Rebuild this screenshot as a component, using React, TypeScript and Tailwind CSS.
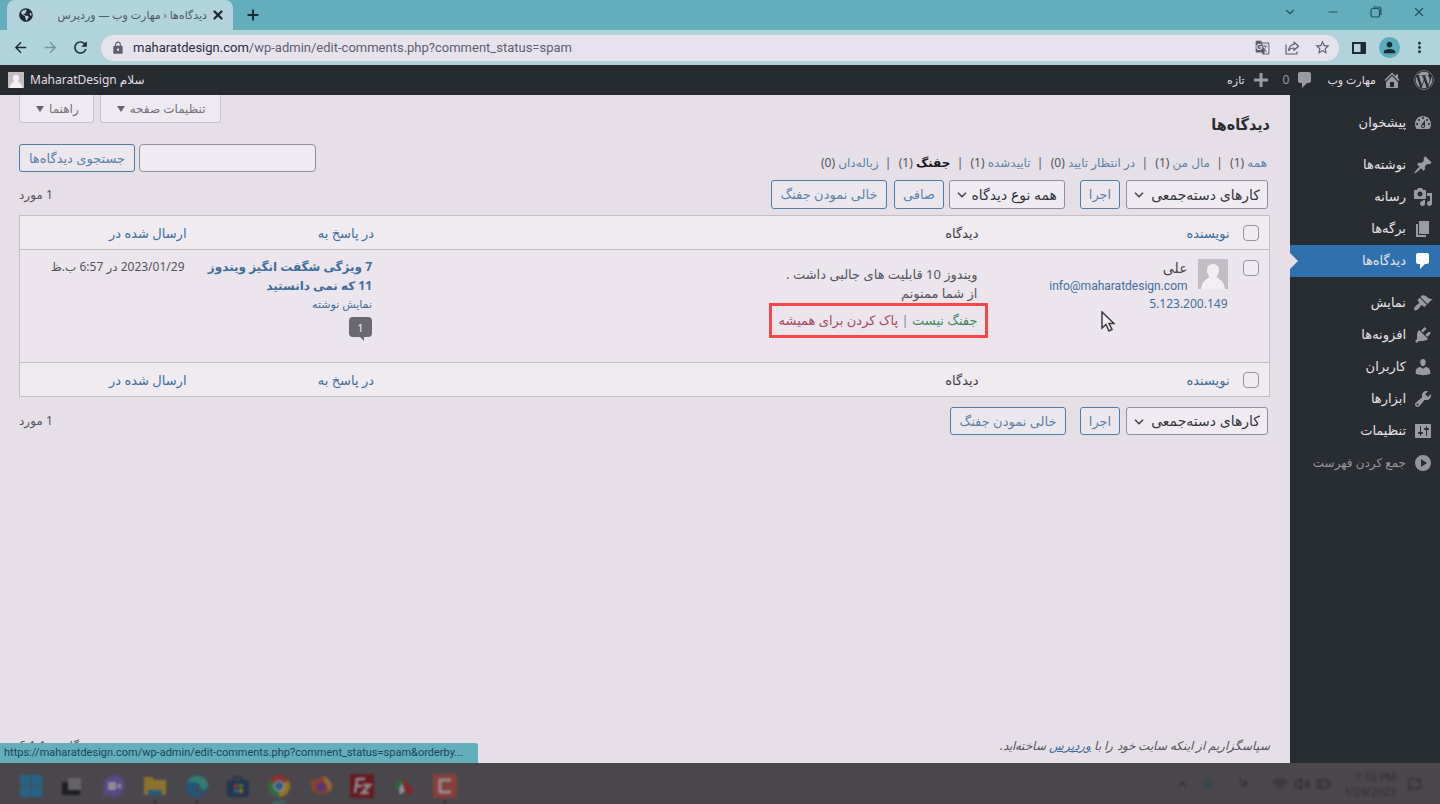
import type { ReactNode } from "react";
import { FaGlobeAmericas, FaWordpress } from "react-icons/fa";
import {
    MdArrowBack,
    MdArrowForward,
    MdGTranslate,
    MdLock,
    MdMoreVert,
    MdPerson,
    MdRefresh,
    MdStarBorder,
} from "react-icons/md";
import { BatteryMedium, ChevronDown, ChevronUp, MessageSquareDot, Mic, Minus, Plus, Volume2, Wifi, X } from "lucide-react";

const icons = {
    dashboard:
        "M3.76 16h12.48c1.1-1.37 1.76-3.11 1.76-5 0-4.42-3.58-8-8-8s-8 3.58-8 8c0 1.89.66 3.63 1.76 5zM10 4c.55 0 1 .45 1 1s-.45 1-1 1-1-.45-1-1 .45-1 1-1zM6 6c.55 0 1 .45 1 1s-.45 1-1 1-1-.45-1-1 .45-1 1-1zm8 0c.55 0 1 .45 1 1s-.45 1-1 1-1-.45-1-1 .45-1 1-1zm-5.37 5.55L12 7v6c0 1.1-.9 2-2 2s-2-.9-2-2c0-.57.24-1.08.63-1.45zM4 10c.55 0 1 .45 1 1s-.45 1-1 1-1-.45-1-1 .45-1 1-1zm12 0c.55 0 1 .45 1 1s-.45 1-1 1-1-.45-1-1 .45-1 1-1zm-5 3c0-.55-.45-1-1-1s-1 .45-1 1 .45 1 1 1 1-.45 1-1z",
    post: "M10.44 3.02l1.82-1.82 6.36 6.35-1.83 1.82c-1.05-.68-2.48-.57-3.41.36l-.75.75c-.92.93-1.04 2.35-.35 3.41l-1.83 1.82-2.41-2.41-2.8 2.79c-.42.42-3.38 2.71-3.8 2.29s1.86-3.39 2.28-3.81l2.79-2.79L4.1 9.36l1.83-1.82c1.05.69 2.48.57 3.4-.36l.75-.75c.93-.92 1.05-2.35.36-3.41z",
    media: "M13 11V4c0-.55-.45-1-1-1h-1.67L9 1H5L3.67 3H2c-.55 0-1 .45-1 1v7c0 .55.45 1 1 1h10c.55 0 1-.45 1-1zM7 4.5c1.38 0 2.5 1.12 2.5 2.5S8.38 9.5 7 9.5 4.5 8.38 4.5 7 5.62 4.5 7 4.5zM14 6h5v10.5c0 1.38-1.12 2.5-2.5 2.5S14 17.88 14 16.5s1.12-2.5 2.5-2.5c.17 0 .34.02.5.05V9h-3V6zm-4 8.05V13h2v3.5c0 1.38-1.12 2.5-2.5 2.5S7 17.88 7 16.5 8.12 14 9.5 14c.17 0 .34.02.5.05z",
    page: "M6 15V2h10v13H6zm-1 1h8v2H3V5h2v11z",
    comment: "M5 2h9c1.1 0 2 .9 2 2v7c0 1.1-.9 2-2 2h-2l-5 5v-5H5c-1.1 0-2-.9-2-2V4c0-1.1.9-2 2-2z",
    appearance:
        "M14.48 11.06L7.41 3.99l1.5-1.5c.5-.56 2.3-.47 3.51.32 1.21.8 1.43 1.28 2.91 2.1 1.18.64 2.45 1.26 4.45.85zm-.71.71L6.7 4.7 4.93 6.47c-.39.39-.39 1.02 0 1.41l1.06 1.06c.39.39.39 1.03 0 1.42-.6.6-1.43 1.11-2.21 1.69-.35.26-.7.53-1.01.84C1.43 14.23.4 16.08 1.4 17.07c.99 1 2.84-.03 4.18-1.36.31-.31.58-.66.85-1.02.57-.78 1.08-1.61 1.69-2.21.39-.39 1.02-.39 1.41 0l1.06 1.06c.39.39 1.02.39 1.41 0z",
    plugins:
        "M13.11 4.36L9.87 7.6 8 5.73l3.24-3.24c.35-.34 1.05-.2 1.56.32.52.51.66 1.21.31 1.55zm-8 1.77l.91-1.12 9.01 9.01-1.19.84c-.71.71-2.63 1.16-3.82 1.16H6.14L4.9 17.26c-.59.59-1.54.59-2.12 0-.59-.58-.59-1.53 0-2.12l1.24-1.24v-3.88c0-1.13.4-3.19 1.09-3.89zm7.26 3.97l3.24-3.24c.34-.35 1.04-.21 1.55.31.52.51.66 1.21.31 1.55l-3.24 3.25z",
    users: "M10 9.25c-2.27 0-2.73-3.44-2.73-3.44C7 4.02 7.82 2 9.97 2c2.16 0 2.98 2.02 2.71 3.81 0 0-.41 3.44-2.68 3.44zm0 2.57L12.72 10c2.39 0 4.52 2.33 4.52 4.53v2.49s-3.65 1.13-7.24 1.13c-3.65 0-7.24-1.13-7.24-1.13v-2.49c0-2.25 1.94-4.48 4.47-4.48z",
    tools: "M16.68 9.77c-1.34 1.34-3.3 1.67-4.95.99l-5.41 6.52c-.99.99-2.59.99-3.58 0s-.99-2.59 0-3.57l6.52-5.42c-.68-1.65-.35-3.61.99-4.95 1.28-1.28 3.12-1.62 4.72-1.06l-2.89 2.89 2.82 2.82 2.86-2.87c.53 1.58.18 3.39-1.08 4.65zM3.81 16.21c.4.39 1.04.39 1.43 0 .4-.4.4-1.04 0-1.43-.39-.4-1.03-.4-1.43 0-.39.39-.39 1.03 0 1.43z",
    settings:
        "M18 16V4c0-.55-.45-1-1-1H3c-.55 0-1 .45-1 1v12c0 .55.45 1 1 1h14c.55 0 1-.45 1-1zM8 11h1c.55 0 1 .45 1 1s-.45 1-1 1H8v1.5c0 .28-.22.5-.5.5s-.5-.22-.5-.5V13H6c-.55 0-1-.45-1-1s.45-1 1-1h1V5.5c0-.28.22-.5.5-.5s.5.22.5.5V11zm5-2h-1c-.55 0-1-.45-1-1s.45-1 1-1h1V5.5c0-.28.22-.5.5-.5s.5.22.5.5V7h1c.55 0 1 .45 1 1s-.45 1-1 1h-1v5.5c0 .28-.22.5-.5.5s-.5-.22-.5-.5V9z",
    home: "M16 8.5l1.53 1.53-1.06 1.06L10 4.6l-6.47 6.49-1.06-1.06L10 2.5l4 4v-2h2v4zm-6-2.46l6 5.99V18H4v-5.97zM12 17v-5H8v5h4z",
    plus: "M17 8.5v3h-5.5V17h-3v-5.5H3v-3h5.5V3h3v5.5H17z",
    collapse: "M10 2a8 8 0 1 0 0 16 8 8 0 0 0 0-16zM8 6l6 4-6 4V6z",
};

type IconName = keyof typeof icons;

const Dashicon = ({ name, className = "" }: { name: IconName; className?: string }) => (
    <svg viewBox="0 0 20 20" className={`size-5 shrink-0 ${className}`} fill="currentColor" fillRule="evenodd">
        <path d={icons[name]} />
    </svg>
);

const menuGroups: { label: string; icon: IconName }[][] = [
    [{ label: "پیشخوان", icon: "dashboard" }],
    [
        { label: "نوشته‌ها", icon: "post" },
        { label: "رسانه", icon: "media" },
        { label: "برگه‌ها", icon: "page" },
        { label: "دیدگاه‌ها", icon: "comment" },
    ],
    [
        { label: "نمایش", icon: "appearance" },
        { label: "افزونه‌ها", icon: "plugins" },
        { label: "کاربران", icon: "users" },
        { label: "ابزارها", icon: "tools" },
        { label: "تنظیمات", icon: "settings" },
    ],
];

const filters = [
    { label: "همه", count: 1 },
    { label: "مال من", count: 1 },
    { label: "در انتظار تایید", count: 0 },
    { label: "تاییدشده", count: 1 },
    { label: "جفنگ", count: 1, current: true },
    { label: "زباله‌دان", count: 0 },
];

const Avatar = ({ className }: { className: string }) => (
    <svg viewBox="0 0 30 30" className={`shrink-0 ${className}`}>
        <rect width="30" height="30" fill="#c2bcc4" />
        <path d="M15 5c4 0 6 3 6 6 0 3-1 5-2.5 6.5C19 20 26 20 27 30H3c1-10 8-10 8.5-12.5C10 16 9 14 9 11c0-3 2-6 6-6z" fill="#f3eef4" />
    </svg>
);

const Button = ({ children, className = "" }: { children: ReactNode; className?: string }) => (
    <button
        type="button"
        className={`whitespace-nowrap rounded-[3px] border border-[#4f7fa8] bg-[#ece7ef] pt-px text-[13px] text-[#5a83aa] ${className}`}
    >
        {children}
    </button>
);

const Select = ({ label, className }: { label: string; className: string }) => (
    <div className="relative">
        <select
            aria-label={label}
            className={`block appearance-none rounded-[3px] border border-[#928d96] bg-[#f0ebf2] pr-[7px] pl-5 text-sm text-[#33343a] ${className}`}
        >
            <option>{label}</option>
        </select>
        <ChevronDown className="pointer-events-none absolute top-2 left-[6px] size-[14px] text-[#4b4b52]" strokeWidth={3} />
    </div>
);

const Checkbox = ({ label }: { label: string }) => (
    <input
        type="checkbox"
        aria-label={label}
        className="block size-4 appearance-none rounded-[4px] border border-[#96919a] bg-[#f0ebf2]"
    />
);

const HeadingRow = () => (
    <tr className="h-[34px] text-[13px] text-[#3c3d43]">
        <th className="pr-[10px]">
            <Checkbox label="انتخاب همه" />
        </th>
        <th className="px-2 pt-[2px] font-normal">
            <a href="#author" className="text-[#3a6fa0]">نویسنده</a>
        </th>
        <th className="px-[9px] pt-[2px] font-normal">دیدگاه</th>
        <th className="px-2 pt-[2px] font-normal">
            <a href="#response" className="text-[#3a6fa0]">در پاسخ به</a>
        </th>
        <th className="px-2 pt-[2px] font-normal">
            <a href="#date" className="text-[#3a6fa0]">ارسال شده در</a>
        </th>
    </tr>
);

const BrowserChrome = () => (
    <header dir="ltr" className="font-['Roboto','DejaVu_Sans',sans-serif] text-[#1d2a36]">
        <div className="flex h-[30px] items-stretch bg-[#62aebb] pl-[7px]">
            <div className="flex w-[226px] items-center rounded-t-lg bg-[#b3d3dc] px-3">
                <FaGlobeAmericas className="size-[14px]" />
                <span dir="rtl" className="ml-auto font-['Open_Sans','DejaVu_Sans',sans-serif] text-[11px] text-[#4a5b66]">
                    دیدگاه‌ها ‹ مهارت وب — وردپرس
                </span>
                <button type="button" aria-label="Close tab" className="-mr-1 ml-1">
                    <X className="size-[14px]" strokeWidth={4} />
                </button>
            </div>
            <button type="button" aria-label="New tab" className="ml-3">
                <Plus className="size-4" strokeWidth={3} />
            </button>
            <div className="ml-auto flex items-center gap-[29px] pr-[14px] pb-[6px] text-[#23525f]">
                <ChevronDown className="size-[14px]" strokeWidth={2} />
                <Minus className="size-[14px]" strokeWidth={2} />
                <svg viewBox="0 0 14 14" className="size-[14px]" fill="none" stroke="currentColor" strokeWidth="1.2">
                    <rect x="2" y="3.5" width="8.5" height="8.5" rx="2" />
                    <path d="M4 2h6a2 2 0 0 1 2 2v6" />
                </svg>
                <X className="size-[14px]" strokeWidth={2} />
            </div>
        </div>
        <div className="flex h-[35px] items-center bg-[#b3d3dc] px-3">
            <button type="button" aria-label="Back">
                <MdArrowBack className="size-[17px]" />
            </button>
            <button type="button" aria-label="Forward" className="ml-[13px] text-[#7493a0]">
                <MdArrowForward className="size-[17px]" />
            </button>
            <button type="button" aria-label="Reload" className="ml-3">
                <MdRefresh className="size-[19px]" />
            </button>
            <div className="ml-[11px] flex h-[26px] flex-1 items-center rounded-full bg-[#e6e3ee] pr-2 pl-[10px] text-[#5f5e6b]">
                <MdLock className="size-[14px]" />
                <div className="ml-2 flex-1 text-[13px]">
                    <span className="text-[#2b2c38]">maharatdesign.com</span>/wp-admin/edit-comments.php?comment_status=spam
                </div>
                <div className="flex items-center gap-[14px]">
                    <MdGTranslate className="size-[15px]" />
                    <svg viewBox="0 0 16 16" className="size-4" fill="none" stroke="currentColor" strokeWidth="1.2" strokeLinejoin="round">
                        <path d="M2 4.5V14h11v-2.5" />
                        <path d="M10 2l4.5 4.2L10 10.3V8c-2.7 0-4.2.8-5.3 2.6C5 7 6.8 4.8 10 4.4z" />
                    </svg>
                    <MdStarBorder className="size-[17px]" />
                </div>
            </div>
            <svg viewBox="0 0 14 12" className="ml-[13px] h-3 w-[14px]">
                <rect x="1" y="1" width="12" height="10" fill="none" stroke="currentColor" strokeWidth="2" />
                <path d="M8.5 0H14v12H8.5z" fill="currentColor" />
            </svg>
            <div className="ml-[13px] flex size-[21px] items-center justify-center rounded-full bg-[#5cabb8]">
                <MdPerson className="size-[17px]" />
            </div>
            <button type="button" aria-label="Menu" className="ml-[11px]">
                <MdMoreVert className="size-[17px]" />
            </button>
        </div>
    </header>
);

const AdminBar = () => (
    <div className="flex h-[30px] items-center bg-[#262b30] pr-[6px] pl-2 text-[11px] text-[#e3dee6]">
        <FaWordpress className="size-5 text-[#9b9ba3]" />
        <a href="#site" className="mr-3 flex items-center gap-[6px]">
            <Dashicon name="home" className="text-[#9b9ba3]" />
            مهارت وب
        </a>
        <a href="#comments" className="mr-3 flex items-center gap-[6px] text-xs text-[#9b9ba3]">
            <Dashicon name="comment" />0
        </a>
        <a href="#new" className="mr-3 flex items-center gap-[6px]">
            <Dashicon name="plus" className="text-[#9b9ba3]" />
            تازه
        </a>
        <a href="#profile" className="mr-auto flex items-center gap-[6px] text-xs">
            <span>سلام MaharatDesign</span>
            <Avatar className="size-4" />
        </a>
    </div>
);

const Sidebar = () => (
    <nav className="w-[150px] shrink-0 bg-[#282d32] pt-3 text-[13px] text-[#e6e1e9]">
        {menuGroups.map((group, i) => (
            <ul key={i} className="mb-[10px]">
                {group.map(({ label, icon }) => {
                    const active = icon === "comment";
                    return (
                        <li key={icon} className={active ? "relative bg-[#2e71ae]" : ""}>
                            <a href={`#${icon}`} className="flex h-8 items-center gap-[7px] pr-[7px]">
                                <Dashicon name={icon} className={active ? "text-white" : "text-[#9b9ba3]"} />
                                {label}
                            </a>
                            {active && (
                                <span className="absolute top-2 left-0 border-y-8 border-l-8 border-y-transparent border-l-[#e6dfe7]" />
                            )}
                        </li>
                    );
                })}
            </ul>
        ))}
        <button type="button" className="-mt-[10px] flex h-8 items-center gap-[7px] pr-[7px] text-xs text-[#95959d]">
            <Dashicon name="collapse" />
            جمع کردن فهرست
        </button>
    </nav>
);

const CommentsTable = () => (
    <table className="w-full table-fixed border border-[#c3bdc6] bg-[#ece5ed] text-right">
        <colgroup>
            <col className="w-8" />
            <col className="w-[20%]" />
            <col />
            <col className="w-[15%]" />
            <col className="w-[14%]" />
        </colgroup>
        <thead className="border-b border-[#c3bdc6] bg-[#f0ebf1]">
            <HeadingRow />
        </thead>
        <tbody>
            <tr className="h-[113px] align-top text-xs text-[#55555c]">
                <td className="pt-[10px] pr-[10px]">
                    <Checkbox label="انتخاب دیدگاه" />
                </td>
                <td className="px-[10px] pt-[9px] leading-[18px]">
                    <div className="flex gap-[10px]">
                        <Avatar className="size-[30px]" />
                        <div>
                            <strong className="block text-sm leading-[18px] font-medium text-[#45464c]">علی</strong>
                            <a href="mailto:info@maharatdesign.com" className="block font-['Roboto',sans-serif] text-[#3d6f9d]">info@maharatdesign.com</a>
                        </div>
                    </div>
                    <a href="#ip" className="block text-[#3d6f9d]">5.123.200.149</a>
                </td>
                <td className="px-[10px] pt-[15px] text-[13px] leading-[19px]">
                    <p>ویندوز 10 قابلیت های جالبی داشت .</p>
                    <p>از شما ممنونم</p>
                    <div className="relative mt-2 w-fit text-[#8b8791]">
                        <a href="#unspam" className="text-[#3f8a60]">جفنگ نیست</a> |{" "}
                        <a href="#delete" className="text-[#a8485f]">پاک کردن برای همیشه</a>
                        <span className="absolute -inset-x-[10px] -inset-y-2 border-3 border-[#fb4444]" />
                    </div>
                </td>
                <td className="px-[10px] pt-[7px] leading-[19px] text-[#3d6f9d]">
                    <a href="#post" className="block font-bold whitespace-nowrap">
                        7 ویژگی شگفت انگیز ویندوز
                        <br />
                        11 که نمی دانستید
                    </a>
                    <a href="#view" className="block text-[11px] leading-[18px]">نمایش نوشته</a>
                    <a href="#count" className="relative mt-1 flex h-5 w-[23px] items-center justify-center rounded-[4px] bg-[#6a6870] text-[11px] text-[#f3eef4]">
                        1
                        <span className="absolute top-full left-[11px] border-t-4 border-l-4 border-t-[#6a6870] border-l-transparent" />
                    </a>
                </td>
                <td className="px-[10px] pt-[7px] leading-[19px]">2023/01/29 در 6:57 ب.ظ</td>
            </tr>
        </tbody>
        <tfoot className="border-t border-[#c3bdc6] bg-[#f0ebf1]">
            <HeadingRow />
        </tfoot>
    </table>
);

const MetaTab = ({ label }: { label: string }) => (
    <button
        type="button"
        className="flex h-7 items-center gap-[5px] rounded-b-[3px] border border-t-0 border-[#c9c3cc] bg-[#efeaf1] pr-[14px] pl-4 text-xs text-[#74727a]"
    >
        {label}
        <span className="border-x-4 border-t-[6px] border-x-transparent border-t-[#66646c]" />
    </button>
);

const CommentsPage = () => (
    <main className="relative flex min-w-0 flex-1 flex-col bg-[#e6dfe7] pr-5 pl-[19px] text-[#55555c]">
        <div className="flex justify-between">
            <h1 className="pt-[18px] font-['DejaVu_Sans_Condensed','DejaVu_Sans',sans-serif] text-base leading-6 font-bold text-[#2b2c31]">
                دیدگاه‌ها
            </h1>
            <div className="flex items-start gap-[6px]">
                <MetaTab label="تنظیمات صفحه" />
                <MetaTab label="راهنما" />
            </div>
        </div>

        <div className="mt-[7px] flex justify-between">
            <ul className="flex gap-px pt-[10px] pr-[3px] text-xs leading-[18px]">
                {filters.map(({ label, count, current }, i) => (
                    <li key={label} className="whitespace-pre">
                        {i > 0 && "  |  "}
                        <a href="#filter" className={current ? "font-bold text-[#17181c]" : "text-[#5a83aa]"}>
                            {label}
                        </a>{" "}
                        ({count})
                    </li>
                ))}
            </ul>
            <form className="flex items-center gap-1" onSubmit={(e) => e.preventDefault()}>
                <input
                    type="search"
                    aria-label="جستجوی دیدگاه‌ها"
                    className="h-7 w-[177px] rounded-[4px] border border-[#928d96] bg-[#f0ebf2] px-2 text-xs"
                />
                <Button className="h-7 w-[116px]">جستجوی دیدگاه‌ها</Button>
            </form>
        </div>

        <div className="mt-2 flex items-center pr-[2px]">
            <Select label="کارهای دسته‌جمعی" className="h-[29px] w-[142px]" />
            <Button className="mr-[6px] h-[29px] w-10">اجرا</Button>
            <div className="mr-[15px]">
                <Select label="همه نوع دیدگاه" className="h-[29px] w-[116px]" />
            </div>
            <Button className="mr-[5px] h-[29px] w-[50px]">صافی</Button>
            <Button className="mr-[7px] h-[29px] w-[116px]">خالی نمودن جفنگ</Button>
            <span className="mr-auto text-xs">1 مورد</span>
        </div>

        <div className="mt-[6px] mb-[10px]">
            <CommentsTable />
        </div>

        <div className="flex items-center pr-[2px]">
            <Select label="کارهای دسته‌جمعی" className="h-7 w-[142px]" />
            <Button className="mr-[6px] h-7 w-10">اجرا</Button>
            <Button className="mr-[14px] h-7 w-[116px]">خالی نمودن جفنگ</Button>
            <span className="mr-auto text-xs">1 مورد</span>
        </div>

        <footer className="mt-auto flex justify-between pb-2 text-xs leading-[18px]">
            <p className="italic">
                سپاسگزاریم از اینکه سایت خود را با{" "}
                <a href="#wordpress" className="text-[#3d6f9d] underline">وردپرس</a> ساخته‌اید.
            </p>
            <p>نگارش 6.1.1</p>
        </footer>

        {/* link preview of the browser */}
        <div
            dir="ltr"
            className="absolute bottom-0 left-0 h-5 min-w-[478px] whitespace-nowrap rounded-tr-[3px] bg-[#62aebb] px-1 font-['Roboto',sans-serif] text-[11px] leading-5 text-[#1d4653]"
        >
            https://maharatdesign.com/wp-admin/edit-comments.php?comment_status=spam&orderby...
        </div>

        {/* mouse pointer */}
        <svg viewBox="0 0 14 21" className="absolute top-[216px] right-[175px] h-[21px] w-[14px]">
            <path d="M1 1v16l4-3.5 3 6.5 3-1.5-3-6h5z" fill="#f3eef4" stroke="#3a3a42" strokeWidth="1.5" />
        </svg>
    </main>
);

const taskbarApps: { name: string; running?: boolean; art: ReactNode }[] = [
    { name: "Start", art: <path d="M1 1h10.5v10.5H1zM12.5 1H23v10.5H12.5zM1 12.5h10.5V23H1zM12.5 12.5H23V23H12.5z" fill="#1f6a96" /> },
    {
        name: "Task view",
        art: (
            <>
                <path d="M8 4h13v12H8z" fill="#6d6a70" />
                <path d="M2 8h6v8h12v5H2z" fill="#161519" />
            </>
        ),
    },
    {
        name: "Chat",
        art: (
            <>
                <path d="M12 1a11 11 0 1 1-5 20.7L1 23l1-6A11 11 0 0 1 12 1z" fill="#5a4c8c" />
                <path d="M6 8h8v8H6zM15 11l4-2v6l-4-2z" fill="#a39db4" />
            </>
        ),
    },
    {
        name: "Explorer",
        running: true,
        art: (
            <>
                <path d="M1 3h8l2 3h12v15H1z" fill="#a07d23" />
                <path d="M5 16h14v5H5z" fill="#1f5f8e" />
            </>
        ),
    },
    {
        name: "Edge",
        running: true,
        art: (
            <>
                <circle cx="12" cy="12" r="11" fill="#175a86" />
                <path d="M2 9C5 0 20-1 23 10c1 5-5 7-8 5 2-5-5-9-13-6z" fill="#2f8a78" />
                <path d="M10 12c0 7 6 9 11 6 1-1-1 0-4-1-3-.5-4-3-3-5z" fill="#49464b" />
            </>
        ),
    },
    {
        name: "Store",
        art: (
            <>
                <path d="M1 6h22v14a3 3 0 0 1-3 3H4a3 3 0 0 1-3-3zM7 6V2h10v4h-2V4H9v2z" fill="#1b3350" />
                <path d="M8 10h4v4H8z" fill="#963a26" />
                <path d="M13 10h4v4h-4z" fill="#457a2c" />
                <path d="M8 15h4v4H8z" fill="#1f6a96" />
                <path d="M13 15h4v4h-4z" fill="#a07d23" />
            </>
        ),
    },
    {
        name: "Chrome",
        running: true,
        art: (
            <>
                <path d="M12 12L2.5 6.5a11 11 0 0 1 19 0z" fill="#993026" />
                <path d="M12 12l9.5-5.5A11 11 0 0 1 12 23z" fill="#a5831f" />
                <path d="M12 12v11A11 11 0 0 1 2.5 6.5z" fill="#2c7538" />
                <circle cx="12" cy="12" r="5.5" fill="#b0acb2" />
                <circle cx="12" cy="12" r="4.2" fill="#285f9c" />
            </>
        ),
    },
    {
        name: "Firefox",
        art: (
            <>
                <path d="M2 5l3 2c4-4 8-2 9-5 5 2 9 6 9 11a11 10 0 0 1-21 0z" fill="#9c4127" />
                <path d="M14 2c5 2 9 6 9 11a9 9 0 0 1-4 6c2-7-4-9-5-17z" fill="#a5752b" />
                <circle cx="12" cy="13" r="5" fill="#5d327c" />
            </>
        ),
    },
    {
        name: "FileZilla",
        art: (
            <>
                <path d="M0 0h24v24H0z" fill="#6c1117" />
                <path d="M5 19L7 5h8M6 12h6M13 11h7l-8 8h7" stroke="#a59fa6" strokeWidth="2.5" fill="none" />
            </>
        ),
    },
    {
        name: "Parrot",
        art: (
            <>
                <path d="M2 14L10 2l3 6-4 8z" fill="#266b38" />
                <path d="M10 2l12 15-6 5-4-8z" fill="#8e1f24" />
                <path d="M10 9l3 8-5 4-1-6z" fill="#a7a3a9" />
            </>
        ),
    },
    {
        name: "Camtasia",
        running: true,
        art: (
            <>
                <path d="M0 0h24v24H0z" fill="#973e36" />
                <path d="M18 6H7v12h11" stroke="#a8a0a4" strokeWidth="3" fill="none" />
            </>
        ),
    },
];

const Taskbar = () => (
    <footer dir="ltr" className="flex h-[41px] items-center justify-between bg-[#4a474c] pr-[18px] pl-[19px] font-['Open_Sans',sans-serif] text-[#2b292e]">
        <div className="flex h-full w-[438px] justify-between pt-[11px] opacity-80 blur-[1px]">
            {taskbarApps.map(({ name, running, art }) => (
                <button key={name} type="button" aria-label={name} className="flex h-[30px] flex-col items-center justify-between">
                    <svg viewBox="0 0 24 24" className="size-6">{art}</svg>
                    {running && <span className={name === "Chrome" ? "h-[3px] w-[14px] rounded bg-[#3c6a75]" : "h-[3px] w-1 rounded bg-[#2b292e]"} />}
                </button>
            ))}
        </div>
        <div className="flex items-center blur-[1px]">
            <ChevronUp className="size-[14px]" />
            <Mic className="ml-3 size-[14px] text-[#27444a]" />
            <span className="ml-6 font-['DejaVu_Sans',sans-serif] text-[11px]">فا</span>
            <Wifi className="ml-6 size-4" />
            <Volume2 className="ml-[6px] size-4" />
            <BatteryMedium className="ml-[6px] size-4" />
            <div className="ml-3 text-right text-[11px] leading-[15px]">
                <div>7:10 PM</div>
                <div>1/29/2023</div>
            </div>
            <MessageSquareDot className="ml-3 size-[14px]" />
        </div>
    </footer>
);

export default function App() {
    return (
        <div dir="rtl" className="flex min-h-screen flex-col bg-[#e6dfe7] font-['Noto_Sans','DejaVu_Sans',sans-serif]">
            <BrowserChrome />
            <AdminBar />
            <div className="flex flex-1">
                <Sidebar />
                <CommentsPage />
            </div>
            <Taskbar />
        </div>
    );
}
